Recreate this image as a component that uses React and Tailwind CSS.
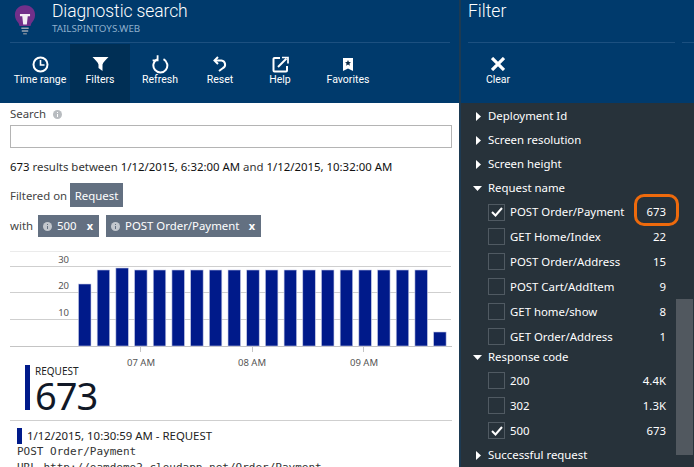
import React from "react";

const Seg = '"Noto Sans","Open Sans",sans-serif';
const Rob = 'Roboto,"Noto Sans",sans-serif';

function Btn({ label, active, w = "w-[60px]", children }) {
  return (
    <div className={`${w} h-[59px] flex flex-col items-center pt-[11px] ${active ? "bg-[#002f55]" : ""}`}>
      <div className="h-[18px] flex items-center justify-center">{children}</div>
      <span className="mt-0 text-[10.500px] leading-[14px] text-white whitespace-nowrap" style={{ fontFamily: Rob }}>{label}</span>
    </div>
  );
}

const Clock = () => (
  <svg width="17" height="17" viewBox="0 0 17 17" fill="none" stroke="white" strokeWidth="2"><circle cx="8.5" cy="8.5" r="7" /><path d="M8.5 4v5h4" strokeWidth="1.6" /></svg>
);
const Funnel = () => (
  <svg width="17" height="14" viewBox="0 0 17 14" fill="white"><path d="M0.5 0h16C14 3 11 5 10.500 7.500V14L6.500 11V7.500C6 5 3 3 0.500 0z" /></svg>
);
const Refresh = () => (
  <svg width="17" height="19" viewBox="0 0 17 19" fill="none" stroke="white" strokeWidth="2"><path d="M11.500 4.200A7 7 0 1 1 5 4.300" /><path d="M5.600 0.500v5h-5" strokeWidth="1.800" transform="translate(0 -0.200)" /></svg>
);
const Undo = () => (
  <svg width="14" height="16" viewBox="0 0 14 16" fill="none" stroke="white" strokeWidth="2"><path d="M5 1L1.500 4.500 5 8" /><path d="M2 4.500h6.500a4 4 0 0 1 1.500 7.500L6 15" /></svg>
);
const External = () => (
  <svg width="17" height="17" viewBox="0 0 17 17" fill="none" stroke="white" strokeWidth="2"><path d="M8 2H2.500a1 1 0 0 0-1 1v11.500a1 1 0 0 0 1 1H14a1 1 0 0 0 1-1V10" /><path d="M6 11l8.500-8.500" /><path d="M10 1.500h6v6" strokeWidth="1.700" /></svg>
);
const Fav = () => (
  <svg width="10" height="13" viewBox="0 0 10 13"><path d="M0 0h10v13L5 10.500 0 13z" fill="white" /><path d="M5 2l.9 2 2.100.2-1.600 1.400.5 2.100L5 6.600 3.100 7.700l.5-2.100L2 4.200 4.100 4z" fill="#0d2a45" /></svg>
);
const X = () => (
  <svg width="14" height="14" viewBox="0 0 14 14" stroke="white" strokeWidth="3.200"><path d="M1 1l12 12M13 1L1 13" /></svg>
);
const Bulb = () => (
  <svg width="22" height="30" viewBox="0 0 24 32">
    <path d="M12 0C5 0 1 5 1 10.500c0 4 2 6.500 4 9l1 3h12l1-3c2-2.500 4-5 4-9C23 5 19 0 12 0z" fill="#71308a" />
    <path d="M6.500 9.500h11v2.500H15l-1 9h-4l-1-9H6.500z" fill="#f3eef5" />
    <path d="M8 25h8M8.500 28h7" stroke="#9aa5b1" strokeWidth="1.800" />
    <path d="M10 31h4" stroke="#7f8c99" strokeWidth="1.500" />
  </svg>
);

const Info = ({ c = "#b8bcc0", dot = "#ffffff" }) => (
  <svg width="9" height="9" viewBox="0 0 9 9"><circle cx="4.500" cy="4.500" r="4.500" fill={c} /><path d="M4.500 2v1M4.500 4v3" stroke={dot} strokeWidth="1" /></svg>
);

const bars = [284, 270, 268, 270, 270, 270, 270, 270, 270, 270, 270, 270, 270, 270, 270, 270, 270, 270, 270, 332];

function Chart() {
  return (
    <svg width="452" height="124" viewBox="0 0 452 124" className="block" style={{ fontFamily: Seg }}>
      <path d="M10 .5H451" stroke="#ebebeb" />
      <path d="M10 15.500H451M10 41.500H451M10 68.500H451" stroke="#cfcfcf" />
      <path d="M10 95.500H452" stroke="#c4c4c4" />
      {bars.map((t, i) => (
        <rect key={i} x={78.500 + i * 18.690} y={t - 251} width={12.500} height={346 - t} fill="#001a8a" stroke="#c5cae6" strokeWidth="0.600" />
      ))}
      <path d="M140.500 96v5M252.500 96v5M363.500 96v5" stroke="#c4c4c4" />
      <g fontSize="9.500" fill="#555">
        <text x="69" y="12" textAnchor="end">30</text>
        <text x="69" y="38" textAnchor="end">20</text>
        <text x="69" y="65" textAnchor="end">10</text>
        <text x="141" y="115" textAnchor="middle">07 AM</text>
        <text x="252" y="115" textAnchor="middle">08 AM</text>
        <text x="364" y="115" textAnchor="middle">09 AM</text>
      </g>
    </svg>
  );
}

function Tag({ children, w }) {
  return (
    <span className={`${w} h-[22px] bg-[#637081] text-white flex items-center pl-[5px] pr-[6px] whitespace-nowrap`}>
      <Info c="#c3c8ce" dot="#637081" />
      <span className="ml-[5px] flex-1">{children}</span>
      <span className="font-bold text-[11px]">x</span>
    </span>
  );
}

function Group({ label, open, h = "h-[24px]" }) {
  return (
    <div className={`${h} flex items-center pl-[12px] text-white text-[11.400px]`}>
      <span className="w-[15px] flex">
        {open ? (
          <svg width="9" height="5" viewBox="0 0 9 5"><path d="M0 0h9L4.500 5z" fill="white" /></svg>
        ) : (
          <svg width="5" height="9" viewBox="0 0 5 9" className="ml-[3px]"><path d="M0 0l5 4.500L0 9z" fill="white" /></svg>
        )}
      </span>
      <span>{label}</span>
    </div>
  );
}

function Row({ label, n, on, h = "h-[25px]" }) {
  return (
    <div className={`${h} flex items-center pl-[27px] text-white text-[11.400px]`}>
      <span className="w-[17px] h-[17px] border border-[#505a62] flex items-center justify-center">
        {on && (
          <svg width="12" height="10" viewBox="0 0 12 10" fill="none" stroke="white" strokeWidth="2"><path d="M1 5l3.500 3.500L11 1" /></svg>
        )}
      </span>
      <span className="ml-[5px] flex-1 whitespace-nowrap">{label}</span>
      <span className="w-[40px] text-right">{n}</span>
    </div>
  );
}

export default function App() {
  return (
    <div className="w-[694px] h-[467px] overflow-hidden flex" style={{ fontFamily: Seg }}>
      <div className="w-[459px] shrink-0 flex flex-col">
        <header className="h-[103px] bg-[#003a6c] flex flex-col">
          <div className="h-[43px] mx-[10px] w-[440px] border-b border-[#1c5080] flex">
            <div className="w-[42px] pl-[4px] pt-[5px]"><Bulb /></div>
            <div className="flex flex-col">
              <span className="text-[17.500px] leading-[22px] text-white font-light -tracking-[0.1px]" style={{ fontFamily: Rob }}>Diagnostic search</span>
              <span className="text-[9.800px] leading-[12px] mt-[1px] text-[#8fb0cc]">TAILSPINTOYS.WEB</span>
            </div>
          </div>
          <div className="flex pl-[10px] h-[60px] items-end">
            <Btn label="Time range"><Clock /></Btn>
            <Btn label="Filters" active><Funnel /></Btn>
            <Btn label="Refresh"><Refresh /></Btn>
            <Btn label="Reset"><Undo /></Btn>
            <Btn label="Help"><External /></Btn>
            <Btn label="Favorites" w="w-[76px]"><Fav /></Btn>
          </div>
        </header>
        <main className="flex-1 bg-white overflow-hidden text-[11.400px] text-[#444]">
          <div className="pl-[10px] h-[22px] flex items-center gap-[7px]">
            <span>Search</span>
            <Info />
          </div>
          <div className="ml-[10px] w-[442px] h-[23px] border border-[#b4b4b4]" />
          <div className="pl-[10px] mt-[10px] h-[17px] leading-[17px] text-[#333]">
            <span className="text-[#111]">673</span> results between <span className="text-[#111]">1/12/2015, 6:32:00 AM</span> and <span className="text-[#111]">1/12/2015, 10:32:00 AM</span>
          </div>
          <div className="pl-[10px] mt-[8px] h-[24px] flex items-center pt-[1px]">
            <span className="w-[60px]">Filtered on</span>
            <span className="h-[24px] w-[53px] mt-[-1px] pt-[1px] bg-[#637081] text-white flex items-center justify-center">Request</span>
          </div>
          <div className="pl-[10px] mt-[8px] h-[22px] flex items-center">
            <span className="w-[28px]">with</span>
            <Tag w="w-[61px]">500</Tag>
            <span className="w-[7px]" />
            <Tag w="w-[155px]">POST Order/Payment</Tag>
          </div>
          <div className="mt-[14px]"><Chart /></div>
          <div className="ml-[25px] mt-[-10px] h-[45px] flex">
            <span className="w-[5px] bg-[#001a8a]" />
            <div className="ml-[5px] flex flex-col">
              <span className="text-[10px] leading-[11px] mt-[1px] text-[#222]">REQUEST</span>
              <span className="text-[38px] leading-[34px] mt-[1px] text-[#111827] -tracking-[1px]">673</span>
            </div>
          </div>
          <div className="mx-[10px] mt-[10px] w-[442px] border-t border-[#cfcfcf]" />
          <div className="ml-[17px] mt-[7px] flex items-center h-[16px]">
            <span className="w-[5px] h-[16px] bg-[#001a8a]" />
            <span className="ml-[5px] text-[#222] whitespace-nowrap">1/12/2015, 10:30:59 AM - REQUEST</span>
          </div>
          <div className="ml-[17px] mt-[1px] text-[11px] leading-[14px] whitespace-nowrap text-[#333]" style={{ fontFamily: '"DejaVu Sans Mono",monospace' }}>
            <div className="h-[16px]">POST Order/Payment</div>
            <div>URL http://oamdemo2.cloudapp.net/Order/Payment</div>
          </div>
        </main>
      </div>
      <div className="w-[2px] shrink-0 bg-[#1d3a52]" />
      <div className="flex-1 flex flex-col relative">
        <header className="h-[103px] bg-[#003a6c] flex flex-col">
          <div className="h-[43px] ml-[7px] flex">
            <div className="w-[207px] border-b border-[#1c5080]">
              <span className="text-[17.500px] leading-[22px] text-white font-light block" style={{ fontFamily: Rob }}>Filter</span>
            </div>
            <div className="ml-[7px] flex-1 border-b border-[#1c5080]" />
          </div>
          <div className="flex pl-[7px] h-[60px] items-end">
            <Btn label="Clear"><X /></Btn>
          </div>
        </header>
        <div className="flex-1 bg-[#27323a] pt-[1px] pr-[28px]">
          <Group label="Deployment Id" />
          <Group label="Screen resolution" />
          <Group label="Screen height" />
          <Group label="Request name" open />
          <Row label="POST Order/Payment" n="673" on h="h-[24px]" />
          <Row label="GET Home/Index" n="22" />
          <Row label="POST Order/Address" n="15" />
          <Row label="POST Cart/AddItem" n="9" />
          <Row label="GET home/show" n="8" />
          <Row label="GET Order/Address" n="1" />
          <Group label="Response code" open h="h-[16px]" />
          <div className="h-[3px]" />
          <Row label="200" n="4.4K" />
          <Row label="302" n="1.3K" />
          <Row label="500" n="673" on />
          <Group label="Successful request" />
        </div>
        <div className="absolute left-[215px] top-[299px] w-[17px] h-[156px] bg-[#51585f]" />
        <div className="absolute left-[173px] top-[194px] w-[45px] h-[32px] rounded-[10px] border-[3px] border-[#ee6a0c]" />
      </div>
    </div>
  );
}
